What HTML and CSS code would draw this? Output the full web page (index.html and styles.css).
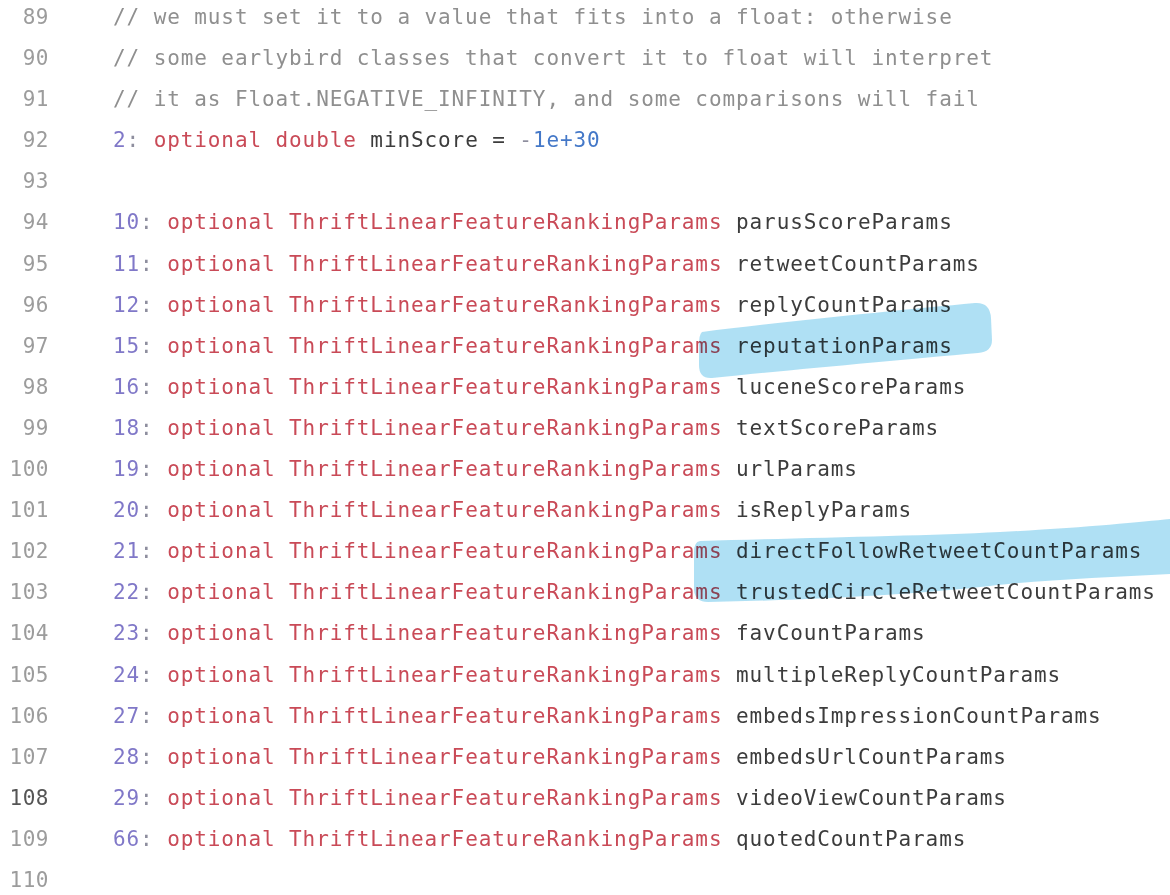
FILE: index.html
```html
<!DOCTYPE html>
<html>
<head>
<meta charset="utf-8">
<link rel="stylesheet" href="styles.css">
</head>
<body>
<div class="page">
  <div class="code">
    <div class="row"><span class="ln">89</span><span class="src"><span class="c">// we must set it to a value that fits into a float: otherwise</span></span></div>
    <div class="row"><span class="ln">90</span><span class="src"><span class="c">// some earlybird classes that convert it to float will interpret</span></span></div>
    <div class="row"><span class="ln">91</span><span class="src"><span class="c">// it as Float.NEGATIVE_INFINITY, and some comparisons will fail</span></span></div>
    <div class="row"><span class="ln">92</span><span class="src"><span class="n">2</span><span class="p">:</span> <span class="k">optional double</span> <span class="i">minScore</span> <span class="i">=</span> <span class="p">-</span><span class="v">1e+30</span></span></div>
    <div class="row"><span class="ln">93</span><span class="src"></span></div>
    <div class="row"><span class="ln">94</span><span class="src"><span class="n">10</span><span class="p">:</span> <span class="k">optional ThriftLinearFeatureRankingParams</span> <span class="i">parusScoreParams</span></span></div>
    <div class="row"><span class="ln">95</span><span class="src"><span class="n">11</span><span class="p">:</span> <span class="k">optional ThriftLinearFeatureRankingParams</span> <span class="i">retweetCountParams</span></span></div>
    <div class="row"><span class="ln">96</span><span class="src"><span class="n">12</span><span class="p">:</span> <span class="k">optional ThriftLinearFeatureRankingParams</span> <span class="i">replyCountParams</span></span></div>
    <div class="row"><span class="ln">97</span><span class="src"><span class="n">15</span><span class="p">:</span> <span class="k">optional ThriftLinearFeatureRankingParams</span> <span class="i">reputationParams</span></span></div>
    <div class="row"><span class="ln">98</span><span class="src"><span class="n">16</span><span class="p">:</span> <span class="k">optional ThriftLinearFeatureRankingParams</span> <span class="i">luceneScoreParams</span></span></div>
    <div class="row"><span class="ln">99</span><span class="src"><span class="n">18</span><span class="p">:</span> <span class="k">optional ThriftLinearFeatureRankingParams</span> <span class="i">textScoreParams</span></span></div>
    <div class="row"><span class="ln">100</span><span class="src"><span class="n">19</span><span class="p">:</span> <span class="k">optional ThriftLinearFeatureRankingParams</span> <span class="i">urlParams</span></span></div>
    <div class="row"><span class="ln">101</span><span class="src"><span class="n">20</span><span class="p">:</span> <span class="k">optional ThriftLinearFeatureRankingParams</span> <span class="i">isReplyParams</span></span></div>
    <div class="row"><span class="ln">102</span><span class="src"><span class="n">21</span><span class="p">:</span> <span class="k">optional ThriftLinearFeatureRankingParams</span> <span class="i">directFollowRetweetCountParams</span></span></div>
    <div class="row"><span class="ln">103</span><span class="src"><span class="n">22</span><span class="p">:</span> <span class="k">optional ThriftLinearFeatureRankingParams</span> <span class="i">trustedCircleRetweetCountParams</span></span></div>
    <div class="row"><span class="ln">104</span><span class="src"><span class="n">23</span><span class="p">:</span> <span class="k">optional ThriftLinearFeatureRankingParams</span> <span class="i">favCountParams</span></span></div>
    <div class="row"><span class="ln">105</span><span class="src"><span class="n">24</span><span class="p">:</span> <span class="k">optional ThriftLinearFeatureRankingParams</span> <span class="i">multipleReplyCountParams</span></span></div>
    <div class="row"><span class="ln">106</span><span class="src"><span class="n">27</span><span class="p">:</span> <span class="k">optional ThriftLinearFeatureRankingParams</span> <span class="i">embedsImpressionCountParams</span></span></div>
    <div class="row"><span class="ln">107</span><span class="src"><span class="n">28</span><span class="p">:</span> <span class="k">optional ThriftLinearFeatureRankingParams</span> <span class="i">embedsUrlCountParams</span></span></div>
    <div class="row current"><span class="ln">108</span><span class="src"><span class="n">29</span><span class="p">:</span> <span class="k">optional ThriftLinearFeatureRankingParams</span> <span class="i">videoViewCountParams</span></span></div>
    <div class="row"><span class="ln">109</span><span class="src"><span class="n">66</span><span class="p">:</span> <span class="k">optional ThriftLinearFeatureRankingParams</span> <span class="i">quotedCountParams</span></span></div>
    <div class="row"><span class="ln">110</span><span class="src"></span></div>
  </div>
  <svg class="marks" width="1170" height="895" viewBox="0 0 1170 895">
    <path d="M702 332 C 780 322, 900 310, 975 303 Q 990 302, 991 318 L 992 340 Q 992 352, 978 353 C 900 360, 790 370, 712 378 Q 699 379, 699 365 L 699 346 Q 699 334, 702 332 Z" />
    <path d="M700 541 C 800 538, 920 536, 1000 532 C 1080 528, 1140 522, 1170 519 L 1170 574 C 1110 577, 1040 580, 990 586 C 930 593, 820 600, 708 602 Q 695 602, 694 590 L 694 552 Q 694 542, 700 541 Z" />
  </svg>
</div>
</body>
</html>
```

FILE: styles.css
```css
html, body {
  margin: 0;
  padding: 0;
  background: #ffffff;
}

.page {
  position: relative;
  width: 1170px;
  height: 895px;
  overflow: hidden;
}

.code {
  margin-top: -3px;
  font-family: "DejaVu Sans Mono", "Liberation Mono", monospace;
  font-size: 21px;
  letter-spacing: 0.9px;
  line-height: 41.1px;
  filter: blur(0.5px);
}

.row {
  display: flex;
  white-space: pre;
}

.ln {
  width: 49px;
  text-align: right;
  color: #9c9c9c;
  flex: none;
  letter-spacing: 0.5px;
}

.current .ln {
  color: #555555;
}

.src {
  margin-left: 64px;
  color: #3a3a3a;
}

.c { color: #8f8f8f; }
.n { color: #8078c8; }
.p { color: #8e8e9e; }
.k { color: #c94a57; }
.i { color: #3c3c3c; }
.v { color: #4478c8; }

.marks {
  position: absolute;
  top: 0;
  left: 0;
  pointer-events: none;
  mix-blend-mode: multiply;
}

.marks path {
  fill: #a6ddf3;
  opacity: 0.9;
}
```
